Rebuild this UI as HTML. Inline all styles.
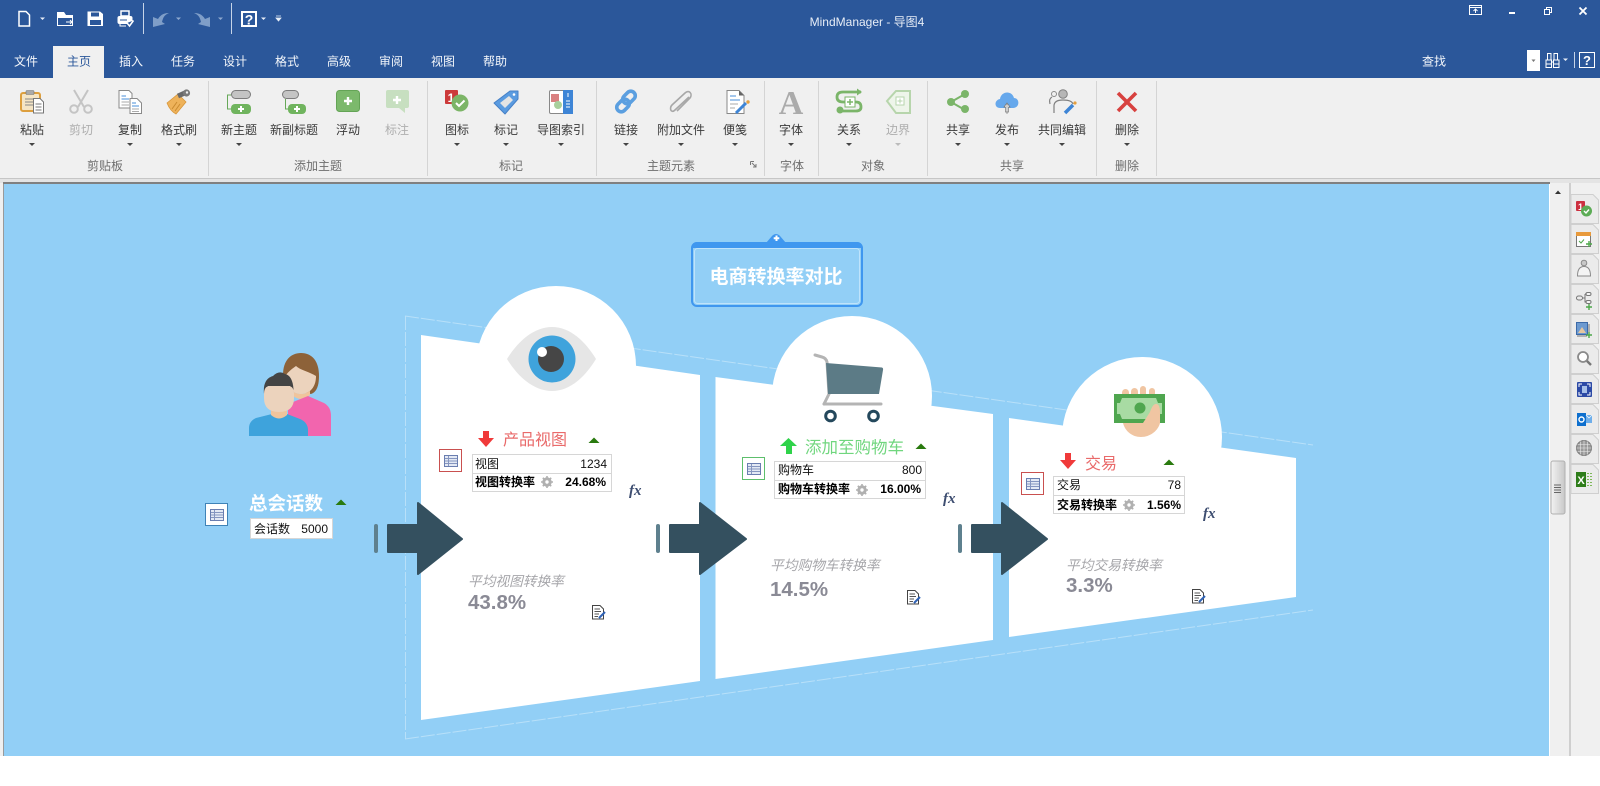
<!DOCTYPE html>
<html lang="zh"><head><meta charset="utf-8"><title>MindManager</title>
<style>
html,body{margin:0;padding:0;width:1600px;height:786px;overflow:hidden;background:#fff}
svg{display:block}
text{font-family:"Liberation Sans","Noto Sans CJK SC",sans-serif}
.t{font-size:12px;fill:#f4f7fb;text-anchor:middle}
.l{font-size:12px;fill:#3a3a3a;text-anchor:middle}
.d{font-size:12px;fill:#aeaeae;text-anchor:middle}
.g{font-size:12px;fill:#6e6e6e;text-anchor:middle}
.c{font-size:12px;fill:#111}
.b{font-size:12px;fill:#000;font-weight:bold}
.e{text-anchor:end}
.i{font-size:13.700px;fill:#a6a6aa;font-style:italic}
.p{font-size:20.500px;fill:#8a8a95;font-weight:bold}
.fx{font-family:"Liberation Serif",serif;font-size:15px;font-weight:bold;font-style:italic;fill:#3d4d70}
</style></head><body>
<svg width="1600" height="786" viewBox="0 0 1600 786" xmlns="http://www.w3.org/2000/svg">
<defs>
<symbol id="list" width="14" height="12" viewBox="0 0 14 12"><rect x=".5" y=".5" width="13" height="11" fill="#e3e9f4" stroke="#6a7eb0"/><path d="M1 3.500H13M1 6H13M1 8.500H13M4.500 1V11" stroke="#8596c0" stroke-width="1" fill="none"/></symbol>
<symbol id="gear" width="12" height="12" viewBox="0 0 12 12"><circle cx="6" cy="6" r="3.500" fill="none" stroke="#b0b0b0" stroke-width="2.500"/><path d="M6 0V12M0 6H12M1.800 1.800L10.200 10.200M10.200 1.800L1.800 10.200" stroke="#b0b0b0" stroke-width="1.600"/><circle cx="6" cy="6" r="1.700" fill="#fff"/></symbol>
<symbol id="pen" width="15" height="15" viewBox="0 0 15 15"><path d="M.5.500H8L11.500 4V14H.5Z" fill="#fff" stroke="#444"/><path d="M2.500 4H8M2.500 6.500H9M2.500 9H7M2.500 11.500H6" stroke="#555"/><path d="M7 13L13 7" stroke="#2f62b5" stroke-width="2"/></symbol>
<linearGradient id="th" x1="0" x2="1"><stop offset="0" stop-color="#f2f2f2"/><stop offset="1" stop-color="#c8c8c8"/></linearGradient>
</defs>

<!-- title bar -->
<rect width="1600" height="78" fill="#2b579a"/>
<text x="867" y="26" font-size="12" fill="#e8eef7" text-anchor="middle">MindManager - 导图4</text>

<!-- quick access -->
<path d="M19 11.500H26L29.500 15V26H19Z" fill="none" stroke="#fff" stroke-width="1.500"/>
<path d="M40 17.500H45L42.500 20Z" fill="#e8eef7"/>
<path d="M57 12H64L66 15H73V26H57Z" fill="#fff"/><path d="M58 18H72V25H58Z" fill="#2b579a"/><path d="M66 22H72M70 20L72 22L70 24" stroke="#fff" fill="none"/>
<path d="M87.500 11.500H100L103 14V26H87.500Z" fill="#fff"/><rect x="91" y="12.500" width="8" height="4" fill="#2b579a"/><rect x="90" y="20" width="11" height="5" fill="#2b579a"/>
<path d="M121 11H129V16H121Z" fill="none" stroke="#fff" stroke-width="1.500"/><rect x="117.500" y="16" width="15" height="8" rx="2" fill="#fff"/><path d="M120 20H127" stroke="#2b579a"/><path d="M127 23L129.500 26L133.500 20.500" stroke="#fff" stroke-width="1.500" fill="#2b579a"/><path d="M120 23V26H126" stroke="#fff" fill="none"/>
<rect x="143" y="3" width="1" height="31" fill="#c6d4e8"/>
<path d="M153 27V17L158 19C161 14 165 13 169 13C164 15 163 18 162 22L165 24Z" fill="#7f9ec8"/>
<path d="M176 17.500H181L178.500 20Z" fill="#8fa9cf"/>
<path d="M210 27V17L205 19C202 14 198 13 194 13C199 15 200 18 201 22L198 24Z" fill="#7f9ec8"/>
<path d="M218 17.500H223L220.500 20Z" fill="#8fa9cf"/>
<rect x="231" y="3" width="1" height="31" fill="#c6d4e8"/>
<rect x="242" y="12" width="14" height="14" fill="none" stroke="#fff" stroke-width="2"/>
<text x="249" y="24.500" font-size="14" font-weight="bold" fill="#fff" text-anchor="middle">?</text>
<path d="M261 17.500H266L263.500 20Z" fill="#e8eef7"/>
<path d="M276 16H281M276 18H281L278.500 21Z" stroke="#e8eef7" fill="#e8eef7" stroke-width=".8"/>

<!-- window buttons -->
<rect x="1469.500" y="5.500" width="12" height="9" fill="none" stroke="#fff"/><path d="M1469 7.500H1482" stroke="#fff"/><path d="M1475.500 13V9M1473.500 11L1475.500 9L1477.500 11" stroke="#fff" fill="none"/>
<rect x="1509" y="12" width="6" height="2" fill="#fff"/>
<rect x="1546.500" y="7.500" width="5" height="5" fill="none" stroke="#fff"/><rect x="1544.500" y="9.500" width="5" height="5" fill="#2b579a" stroke="#fff"/>
<path d="M1579.500 7.500L1586.500 14.500M1586.500 7.500L1579.500 14.500" stroke="#fff" stroke-width="1.800"/>

<!-- tabs -->
<rect x="53" y="46" width="51" height="32" fill="#f0f0f0"/>
<text class="t" x="26" y="65.500">文件</text>
<text class="t" x="79" y="65.500" style="fill:#2b579a">主页</text>
<text class="t" x="131" y="65.500">插入</text>
<text class="t" x="183" y="65.500">任务</text>
<text class="t" x="235" y="65.500">设计</text>
<text class="t" x="287" y="65.500">格式</text>
<text class="t" x="339" y="65.500">高级</text>
<text class="t" x="391" y="65.500">审阅</text>
<text class="t" x="443" y="65.500">视图</text>
<text class="t" x="495" y="65.500">帮助</text>
<text class="t" x="1434" y="65.500">查找</text>
<rect x="1527" y="50" width="13" height="21" fill="#fff"/><path d="M1531.500 59.500H1535.500L1533.500 62Z" fill="#777"/>
<path d="M1547.500 53.500H1551V60H1547.500ZM1554 53.500H1557.500V60H1554ZM1546 60H1551.500V67.500H1546ZM1553.500 60H1559V67.500H1553.500ZM1546 64H1551.500M1553.500 64H1559M1551 62H1554" fill="none" stroke="#fff"/>
<path d="M1563 58.500H1568L1565.500 61Z" fill="#e8eef7"/>
<rect x="1574" y="52" width="1" height="16" fill="#c6d4e8"/>
<rect x="1579.500" y="52.500" width="15" height="15" fill="none" stroke="#fff"/>
<text x="1587" y="65" font-size="13" font-weight="bold" fill="#fff" text-anchor="middle">?</text>

<!-- ribbon -->
<rect y="78" width="1600" height="100" fill="#f0f0f0"/>
<rect y="178" width="1600" height="5" fill="#e4e4e4"/>
<rect y="178" width="1600" height="1" fill="#c6c6c6"/>
<g fill="#d4d4d4">
<rect x="208" y="81" width="1" height="95"/><rect x="427" y="81" width="1" height="95"/><rect x="596" y="81" width="1" height="95"/><rect x="764" y="81" width="1" height="95"/><rect x="818" y="81" width="1" height="95"/><rect x="927" y="81" width="1" height="95"/><rect x="1096" y="81" width="1" height="95"/><rect x="1156" y="81" width="1" height="95"/>
</g>
<text class="l" x="32" y="134">粘贴</text><text class="d" x="81" y="134">剪切</text><text class="l" x="130" y="134">复制</text><text class="l" x="179" y="134">格式刷</text>
<text class="l" x="239" y="134">新主题</text><text class="l" x="294" y="134">新副标题</text><text class="l" x="348" y="134">浮动</text><text class="d" x="397" y="134">标注</text>
<text class="l" x="457" y="134">图标</text><text class="l" x="506" y="134">标记</text><text class="l" x="561" y="134">导图索引</text>
<text class="l" x="626" y="134">链接</text><text class="l" x="681" y="134">附加文件</text><text class="l" x="735" y="134">便笺</text>
<text class="l" x="791" y="134">字体</text><text class="l" x="849" y="134">关系</text><text class="d" x="898" y="134">边界</text>
<text class="l" x="958" y="134">共享</text><text class="l" x="1007" y="134">发布</text><text class="l" x="1062" y="134">共同编辑</text><text class="l" x="1127" y="134">删除</text>
<g fill="#444">
<path d="M29 143H35L32 146Z"/><path d="M127 143H133L130 146Z"/><path d="M176 143H182L179 146Z"/><path d="M236 143H242L239 146Z"/>
<path d="M454 143H460L457 146Z"/><path d="M503 143H509L506 146Z"/><path d="M558 143H564L561 146Z"/>
<path d="M623 143H629L626 146Z"/><path d="M678 143H684L681 146Z"/><path d="M732 143H738L735 146Z"/>
<path d="M788 143H794L791 146Z"/><path d="M846 143H852L849 146Z"/><path d="M895 143H901L898 146Z" fill="#bbb"/>
<path d="M955 143H961L958 146Z"/><path d="M1004 143H1010L1007 146Z"/><path d="M1059 143H1065L1062 146Z"/><path d="M1124 143H1130L1127 146Z"/>
</g>
<text class="g" x="105" y="170">剪贴板</text><text class="g" x="318" y="170">添加主题</text><text class="g" x="511" y="170">标记</text><text class="g" x="671" y="170">主题元素</text><text class="g" x="792" y="170">字体</text><text class="g" x="873" y="170">对象</text><text class="g" x="1012" y="170">共享</text><text class="g" x="1127" y="170">删除</text>
<path d="M750.500 161.500H754M750.500 161.500V165M752 163L756 167M756 164V167H753" stroke="#777" fill="none"/>

<!-- ribbon icons -->
<rect x="21" y="93" width="19" height="18" rx="2" fill="#f5e5c5" stroke="#dd9f3e" stroke-width="2"/><rect x="26" y="90.500" width="8" height="4" rx="1" fill="#aaa" stroke="#777" stroke-width=".6"/><path d="M25 99H33M25 102H33M25 105H33" stroke="#888"/>
<path d="M33.500 98.500H40L43.500 102V113H33.500Z" fill="#fff" stroke="#777"/><path d="M35.500 104H41.500M35.500 107H41.500M35.500 110H41.500" stroke="#777"/>
<path d="M74 90L84 107M88 90L78 107" stroke="#c4c4c4" stroke-width="2" fill="none"/><circle cx="74" cy="109" r="3.800" fill="none" stroke="#c4c4c4" stroke-width="2"/><circle cx="88" cy="109" r="3.800" fill="none" stroke="#c4c4c4" stroke-width="2"/>
<path d="M119 90.500H129L132 93.500V108H119Z" fill="#fff" stroke="#8a8a8a"/><path d="M121.500 96H126M121.500 99H129" stroke="#4a8fd8"/><path d="M121.500 102H129M121.500 105H129" stroke="#aaa"/>
<path d="M130 98.500H137L141.500 103V113.500H130Z" fill="#fff" stroke="#8a8a8a"/><path d="M132 103H136M132 106H139" stroke="#4a8fd8"/><path d="M132 109H139M132 111.500H139" stroke="#aaa"/>
<path d="M167 103L178 94L186 102L176 114C172 112 169 108 167 103Z" fill="#eeb25a" stroke="#d8963a" stroke-width=".8"/>
<path d="M172 109L177 102M175 111L180 104" stroke="#c98a30"/>
<path d="M178 96L187 92" stroke="#6a6a6a" stroke-width="5"/><circle cx="186.500" cy="93" r="3.600" fill="#7a7a7a"/><circle cx="187" cy="92.500" r="1.200" fill="#f0f0f0"/>
<rect x="231.500" y="90.500" width="19" height="8" rx="4" fill="#c4c4c4" stroke="#7c7c7c"/>
<path d="M231 95H227.500V109H231" stroke="#66a858" fill="none"/><rect x="231" y="104" width="20" height="10" rx="4" fill="#70b45e"/><path d="M241 106V112M238 109H244" stroke="#fff" stroke-width="2"/>
<rect x="282.500" y="90.500" width="16" height="8" rx="4" fill="#c4c4c4" stroke="#7c7c7c"/>
<path d="M285.500 99V109H288" stroke="#66a858" fill="none"/><rect x="288" y="104" width="18" height="10" rx="4" fill="#70b45e"/><path d="M297 106V112M294 109H300" stroke="#fff" stroke-width="2"/>
<rect x="336.500" y="90.500" width="23" height="21" rx="3" fill="#7cb96c" stroke="#64a456"/><path d="M348 97V105M344 101H352" stroke="#fff" stroke-width="2.400"/>
<path d="M388 90H407Q409 90 409 92V106Q409 108 407 108H405V113L399 108H388Q386 108 386 106V92Q386 90 388 90Z" fill="#c7dfc0"/><path d="M397 96V104M393 100H401" stroke="#fff" stroke-width="2.400"/>
<rect x="445" y="90" width="13" height="14" rx="1" fill="#cc3a3a"/><text x="451" y="102" font-size="12" font-weight="bold" fill="#fff" text-anchor="middle">1</text>
<circle cx="460" cy="103" r="8.500" fill="#7cb567"/><path d="M456 103L459 106L464.500 100.500" stroke="#fff" stroke-width="2" fill="none"/>
<path d="M494 103L510 91L518 91L518 99L505 114Z" fill="#5a9be0" stroke="#4680c6" stroke-width="1" stroke-linejoin="round"/><path d="M500 103L509 96L513 100L505 108Z" fill="#e4e4e4"/><circle cx="514" cy="94.500" r="1.300" fill="#fff"/>
<rect x="549.500" y="90.500" width="23" height="23" rx="1.500" fill="#fff" stroke="#888"/><rect x="563" y="90" width="10" height="24" fill="#3e85d6"/><rect x="551" y="94" width="8" height="8" fill="#d98080"/><circle cx="558" cy="105" r="4" fill="#a8cf9c"/><path d="M566 101H570M566 104H570M566 107H570M568 93V97" stroke="#fff"/>
<g fill="none" stroke="#5b9fe0" stroke-width="3.600"><rect x="616" y="101" width="14" height="9" rx="4.500" transform="rotate(-45 623 105.500)"/><rect x="622" y="93" width="14" height="9" rx="4.500" transform="rotate(-45 629 97.500)"/></g>
<path d="M689 96L675 109C671 113 669 107 672 104L685 92C689 88 693 93 690 97L677 110" fill="none" stroke="#a8a8a8" stroke-width="1.600" transform="translate(0,1)"/>
<path d="M727 90.500H739L744 95.500V113.500H727Z" fill="#fff" stroke="#888"/><path d="M739 90.500V95.500H744Z" fill="#666"/><path d="M730 96H736M730 100H740" stroke="#4a8fd8"/><path d="M730 104H738M730 108H735" stroke="#aaa"/><path d="M736 113L746 103" stroke="#3e85d6" stroke-width="3"/><circle cx="748" cy="102" r="1.700" fill="#e5a040"/>
<text x="791" y="114" font-size="34" font-weight="bold" fill="#ababab" text-anchor="middle" style="font-family:'Liberation Serif',serif">A</text>
<path d="M861 92H843Q837 92 837 97Q837 102 843 102H856Q861 102 861 107Q861 111 856 111H842" fill="none" stroke="#7bb569" stroke-width="2.800"/><path d="M857 88.500L862 92L857 95.500Z" fill="#7bb569"/><circle cx="840" cy="110" r="3.500" fill="#7bb569"/><rect x="845" y="97" width="10" height="10" fill="#fff" stroke="#7bb569"/><path d="M850 99V105M847 102H853" stroke="#7bb569" stroke-width="1.500"/>
<path d="M887 101L896 91H910V113H896Z" fill="#eef5ea" stroke="#b7d5ac" stroke-width="2"/><rect x="896" y="97" width="8" height="8" fill="#fff" stroke="#b7d5ac"/><path d="M900 98.500V103.500M897.500 101H902.500" stroke="#b7d5ac"/>
<path d="M951 102L965 94M951 102L965 110" stroke="#7bb569" stroke-width="2"/><circle cx="951" cy="102" r="4" fill="#7bb569"/><circle cx="965" cy="94" r="4" fill="#7bb569"/><circle cx="965" cy="109" r="4" fill="#7bb569"/>
<path d="M1001 108H1000C994 108 994 100 1000 99C1001 91 1012 90 1014 98C1020 98 1020 108 1013 108Z" fill="#66a8ec"/><path d="M1007 114V104M1004 107L1007 103L1010 107H1008.500V112H1005.500V107Z" fill="#fff" stroke="#777" stroke-width=".7"/>
<circle cx="1063" cy="94" r="4.300" fill="#b6b6b6" stroke="#808080"/><circle cx="1054" cy="94" r="2.500" fill="none" stroke="#8a8a8a"/><path d="M1054 113V106C1054 101 1059 100 1063 100C1068 100 1072 101 1073 104M1050 104C1049 100 1050 98 1052 97" fill="none" stroke="#808080" stroke-width="1.200"/><path d="M1065 113L1073 105" stroke="#3e85d6" stroke-width="3.500"/><circle cx="1075" cy="103" r="1.600" fill="#e5a040"/>
<path d="M1118 93L1136 111M1136 93L1118 111" stroke="#d8413f" stroke-width="3.600"/>

<!-- map -->
<rect x="0" y="183" width="3" height="573" fill="#f0f0f0"/>
<rect x="3" y="183" width="1547" height="573" fill="#92cff6"/>
<rect x="3" y="182" width="1547" height="2" fill="#808080"/>
<rect x="3" y="184" width="1" height="572" fill="#9a9a9a"/>

<!-- outer dashed frame -->
<g stroke="#b8e0f9" fill="none" stroke-width="1" stroke-dasharray="14 2">
<path d="M405.500 316V739"/><path d="M405 316L1313 445"/><path d="M405 739L1313 610"/>
</g>

<!-- panels -->
<g fill="#fff">
<path d="M421 335L700 375V681L421 720Z"/><circle cx="556" cy="366" r="80"/>
<path d="M715.500 377L993 414V640L715.500 679Z"/><circle cx="852" cy="396" r="80"/>
<path d="M1009 418L1296 458V597L1009 637Z"/><circle cx="1142" cy="437" r="80"/>
</g>

<!-- topic -->
<path d="M766 243L772 236Q776 232 780 236L786 243Z" fill="#3f97ef"/>
<rect x="692" y="243" width="170" height="63" rx="5" fill="#92cff6" stroke="#3f97ef" stroke-width="2"/>
<path d="M692 248V247Q692 242 697 242H857Q862 242 862 247V248Z" fill="#3f97ef"/>
<rect x="694.500" y="248.500" width="165" height="55" rx="3" fill="none" stroke="#bfe3fb"/>
<path d="M776.500 235.500V241M773.700 238.200H779.300" stroke="#fff" stroke-width="2"/>
<text x="776" y="283" font-size="19" font-weight="bold" fill="#fff" text-anchor="middle">电商转换率对比</text>

<!-- people -->
<path d="M283 375C283 360 291 353 301 353C312 353 319 361 319 376C319 385 317 392 311 394L290 390C285 386 283 381 283 375Z" fill="#8d6239"/>
<path d="M286 375C288 372 293 368 296 366C300 370 310 372 316 376C316 388 309 394 301 394C293 394 286 388 286 375Z" fill="#ecd3bd"/>
<path d="M292 391Q301 397 310 391V395Q301 403 292 395Z" fill="#f0c49c"/>
<path d="M288 404L308 396L324 403C329 406 331 410 331 416V436H288Z" fill="#f265ae"/>
<path d="M249 436V428C249 423 252 420 256 418L272 414H287L300 419C305 421 308 425 308 430V436Z" fill="#3ea3dc"/>
<path d="M271 408H287V415Q279 422 271 415Z" fill="#f0c49c"/>
<path d="M264 394C263 384 266 378 273 376Q279 370 285 374C291 375 294 383 293.500 394L290 386H268Z" fill="#444"/>
<path d="M264 394Q264 386 270 386H288Q294 386 294 394V398Q294 412 279 412Q264 412 264 398Z" fill="#ecd3bd"/>

<!-- total -->
<rect x="205.500" y="503.500" width="22" height="22" fill="#fff" stroke="#3f83b7"/>
<use href="#list" x="210" y="509"/>
<text x="249" y="510" font-size="18.500" font-weight="bold" fill="#fff">总会话数</text>
<path d="M335.500 505L341 499.500L346.500 505Z" fill="#297a0e"/>
<rect x="250.500" y="518.500" width="82" height="20" fill="#fff" stroke="#d6d6d6"/>
<text class="c" x="254" y="533">会话数</text><text class="c e" x="328" y="533">5000</text>

<!-- arrows -->
<g fill="#34505f" stroke="#34505f" stroke-width="2" stroke-linejoin="round">
<path d="M388 525H418V503L462 539L418 574V552H388Z"/>
<path d="M670 525H700V503L746 539L700 574V552H670Z"/>
<path d="M972 525H1002V503L1047 539L1002 574V552H972Z"/>
</g>
<g fill="#5e808e"><rect x="374" y="524" width="4" height="29" rx="2"/><rect x="656" y="524" width="4" height="29" rx="2"/><rect x="958" y="524" width="4" height="29" rx="2"/></g>

<!-- eye -->
<path d="M507 359C518 341 534 327 552 327C570 327 585 341 596 359C585 377 570 391 552 391C534 391 518 377 507 359Z" fill="#e6e6e6"/>
<circle cx="552" cy="359" r="23.500" fill="#3fa3dc"/><circle cx="551" cy="359" r="13" fill="#464646"/><circle cx="542" cy="352" r="5" fill="#fff"/>

<!-- panel 1 -->
<path d="M483 431H489V438H494L486 447L478 438H483Z" fill="#f03a3a"/>
<text x="503" y="445" font-size="16" fill="#e96a6a">产品视图</text>
<path d="M588.500 443L594 437.500L599.500 443Z" fill="#297a0e"/>
<rect x="439.500" y="449.500" width="22" height="22" fill="#fff" stroke="#c9504f"/><use href="#list" x="444" y="455"/>
<rect x="472.500" y="454.500" width="139" height="37" fill="#fff" stroke="#d6d6d6"/><path d="M472 473.500H612" stroke="#d6d6d6"/>
<text class="c" x="475" y="468">视图</text><text class="c e" x="607" y="468">1234</text>
<text class="b" x="475" y="486">视图转换率</text><use href="#gear" x="541" y="476"/><text class="b e" x="606" y="486">24.68%</text>
<text class="fx" x="629" y="495">fx</text>
<text class="i" x="468" y="586">平均视图转换率</text>
<text class="p" x="468" y="609">43.8%</text>
<use href="#pen" x="592" y="605"/>

<!-- cart -->
<path d="M815 355L822 357Q826 358 827 362L829 394L824 404" fill="none" stroke="#b4b4b4" stroke-width="3" stroke-linecap="round"/>
<path d="M826 363L882 367.500Q883.500 368 883 370L879 394H828Z" fill="#5c7b86"/>
<path d="M824 404H881" stroke="#b4b4b4" stroke-width="3" stroke-linecap="round"/>
<circle cx="830.500" cy="416" r="4.800" fill="#fff" stroke="#24485c" stroke-width="3"/><circle cx="873.500" cy="416" r="4.800" fill="#fff" stroke="#24485c" stroke-width="3"/>

<!-- panel 2 -->
<path d="M786 454V446H780L788.500 438L797 446H792V454Z" fill="#2fd34a"/>
<text x="805" y="453" font-size="16.500" fill="#70d67e">添加至购物车</text>
<path d="M915.500 449L921 443.500L926.500 449Z" fill="#297a0e"/>
<rect x="742.500" y="457.500" width="22" height="22" fill="#fff" stroke="#5dbf6c"/><use href="#list" x="747" y="463"/>
<rect x="774.500" y="461.500" width="151" height="37" fill="#fff" stroke="#d6d6d6"/><path d="M774 480.500H926" stroke="#d6d6d6"/>
<text class="c" x="778" y="474">购物车</text><text class="c e" x="922" y="474">800</text>
<text class="b" x="778" y="493">购物车转换率</text><use href="#gear" x="856" y="484"/><text class="b e" x="921" y="493">16.00%</text>
<text class="fx" x="943" y="503">fx</text>
<text class="i" x="770" y="570">平均购物车转换率</text>
<text class="p" x="770" y="596">14.5%</text>
<use href="#pen" x="907" y="590"/>

<!-- money -->
<g fill="#f0c5a2"><rect x="1122" y="389" width="7" height="10" rx="3.500"/><rect x="1131" y="388" width="7" height="10" rx="3.500"/><rect x="1140" y="386" width="6" height="12" rx="3"/><rect x="1149" y="388" width="6" height="10" rx="3"/></g>
<rect x="1114" y="394" width="51" height="29" fill="#4fa64f"/>
<path d="M1122 398H1156L1158 403H1162V414L1158 414L1156 419H1122L1120 414H1117V403H1120Z" fill="#a8dba3"/>
<circle cx="1140" cy="408" r="5.500" fill="#4fa64f"/>
<path d="M1123 423H1143L1150 412Q1153 403 1157 404Q1160 405 1160 412V423C1158 431 1150 437 1141 437C1132 437 1125 431 1123 423Z" fill="#f0c5a2"/>

<!-- panel 3 -->
<path d="M1065 453H1071V460H1076L1068 469L1060 460H1065Z" fill="#f03a3a"/>
<text x="1085" y="469" font-size="16" fill="#e96a6a">交易</text>
<path d="M1163.500 465L1169 459.500L1174.500 465Z" fill="#297a0e"/>
<rect x="1021.500" y="472.500" width="22" height="22" fill="#fff" stroke="#c9504f"/><use href="#list" x="1026" y="478"/>
<rect x="1053.500" y="476.500" width="131" height="37" fill="#fff" stroke="#d6d6d6"/><path d="M1053 495.500H1185" stroke="#d6d6d6"/>
<text class="c" x="1057" y="489">交易</text><text class="c e" x="1181" y="489">78</text>
<text class="b" x="1057" y="509">交易转换率</text><use href="#gear" x="1123" y="499"/><text class="b e" x="1181" y="509">1.56%</text>
<text class="fx" x="1203" y="518">fx</text>
<text class="i" x="1066" y="570">平均交易转换率</text>
<text class="p" x="1066" y="592">3.3%</text>
<use href="#pen" x="1192" y="589"/>

<!-- scrollbar + side panel -->
<rect x="1550" y="183" width="50" height="573" fill="#f0f0f0"/>
<rect x="1549" y="184" width="1" height="572" fill="#fff"/>
<rect x="1569" y="183" width="2" height="573" fill="#cfcfcf"/>
<path d="M1555 194H1561L1558 190.500Z" fill="#333"/>
<rect x="1551" y="461" width="14" height="53" rx="2" fill="url(#th)" stroke="#b0b0b0"/>
<path d="M1554 485H1561M1554 487.500H1561M1554 490H1561M1554 492.500H1561" stroke="#666"/>

<!-- side tabs -->
<g fill="#ebebeb" stroke="#cfcfcf">
<path d="M1571 194.500H1593L1598.500 200V223.500H1571Z"/><path d="M1571 224.500H1593L1598.500 230V253.500H1571Z"/><path d="M1571 254.500H1593L1598.500 260V283.500H1571Z"/><path d="M1571 284.500H1593L1598.500 290V313.500H1571Z"/><path d="M1571 314.500H1593L1598.500 320V343.500H1571Z"/><path d="M1571 344.500H1593L1598.500 350V373.500H1571Z"/><path d="M1571 374.500H1593L1598.500 380V403.500H1571Z"/><path d="M1571 404.500H1593L1598.500 410V433.500H1571Z"/><path d="M1571 434.500H1593L1598.500 440V463.500H1571Z"/><path d="M1571 464.500H1593L1598.500 470V493.500H1571Z"/>
</g>
<rect x="1576" y="201" width="9" height="10" rx="1" fill="#cc3040"/><text x="1580.500" y="210" font-size="9" font-weight="bold" fill="#fff" text-anchor="middle">1</text><circle cx="1586.500" cy="211" r="5.500" fill="#5cab55"/><path d="M1584 211L1586 213L1589 209.500" stroke="#fff" stroke-width="1.400" fill="none"/>
<rect x="1576.500" y="232.500" width="14" height="14" fill="#fff" stroke="#777"/><rect x="1576" y="232" width="15" height="4" fill="#e89a3c"/><path d="M1579 241L1581 243L1584 239.500" stroke="#4da84a" fill="none"/><path d="M1589 241V247M1586 244H1592" stroke="#4da84a" stroke-width="1.400"/>
<circle cx="1584" cy="263" r="2.800" fill="#c8c8c8" stroke="#8a8a8a"/><path d="M1577.500 276C1577.500 269 1580 266.500 1584 266.500C1588 266.500 1590.500 269 1590.500 276Z" fill="#f4f4f4" stroke="#8a8a8a"/>
<rect x="1576.500" y="296" width="6" height="4" rx="2" fill="none" stroke="#777"/><path d="M1582 298H1585M1585 294H1591M1585 294V302H1591" fill="none" stroke="#777"/><rect x="1586" y="292.500" width="5" height="3" rx="1.500" fill="#f4f4f4" stroke="#777"/><rect x="1586" y="300.500" width="5" height="3" rx="1.500" fill="#f4f4f4" stroke="#777"/><path d="M1589 304V310M1586 307H1592" stroke="#4da84a" stroke-width="1.400"/>
<rect x="1576.500" y="322.500" width="11" height="12" fill="#6d9ad0" stroke="#3c6aa8"/><path d="M1578 333L1582 327L1586 333Z" fill="#e5c7a0"/><path d="M1589 324V334M1577 336H1587" stroke="#777"/><path d="M1589 332V338M1586 335H1592" stroke="#4da84a" stroke-width="1.400"/>
<circle cx="1583" cy="357" r="5" fill="#fff" stroke="#8a8a8a" stroke-width="1.800"/><path d="M1587 361L1591 365" stroke="#777" stroke-width="2.400"/>
<rect x="1577" y="382" width="15" height="15" rx="1" fill="#2c4aa6"/><path d="M1579 387V384H1582M1587 384H1590V387M1590 392V395H1587M1582 395H1579V392" stroke="#fff" fill="none"/><rect x="1582" y="386" width="5" height="7" fill="#a8c0e8"/>
<rect x="1577" y="413" width="9" height="13" fill="#0d6fce"/><circle cx="1581.500" cy="419.500" r="2.500" fill="none" stroke="#fff" stroke-width="1.400"/><rect x="1586" y="415" width="6" height="8" fill="#6eaeea"/><path d="M1586 415L1589 418L1592 415" stroke="#fff" fill="none" stroke-width=".7"/>
<circle cx="1584" cy="448" r="7.500" fill="#9a9a9a" stroke="#7a7a7a"/><path d="M1576.500 448H1591.500M1577.500 444.500H1590.500M1577.500 451.500H1590.500M1584 440.500V455.500M1580.500 441.500V454.500M1587.500 441.500V454.500" stroke="#ebebeb" stroke-width=".6" fill="none"/>
<rect x="1576" y="472" width="10" height="15" fill="#2e7d1a"/><text x="1581" y="484" font-size="11" font-weight="bold" fill="#fff" text-anchor="middle">X</text><path d="M1587 473.500H1592M1587 476.500H1592M1587 479.500H1592M1587 482.500H1592M1587 485.500H1592" stroke="#7fb85a" stroke-dasharray="2 1"/>

<!-- bottom -->
<rect x="0" y="756" width="1600" height="30" fill="#fff"/>
</svg>
</body></html>
